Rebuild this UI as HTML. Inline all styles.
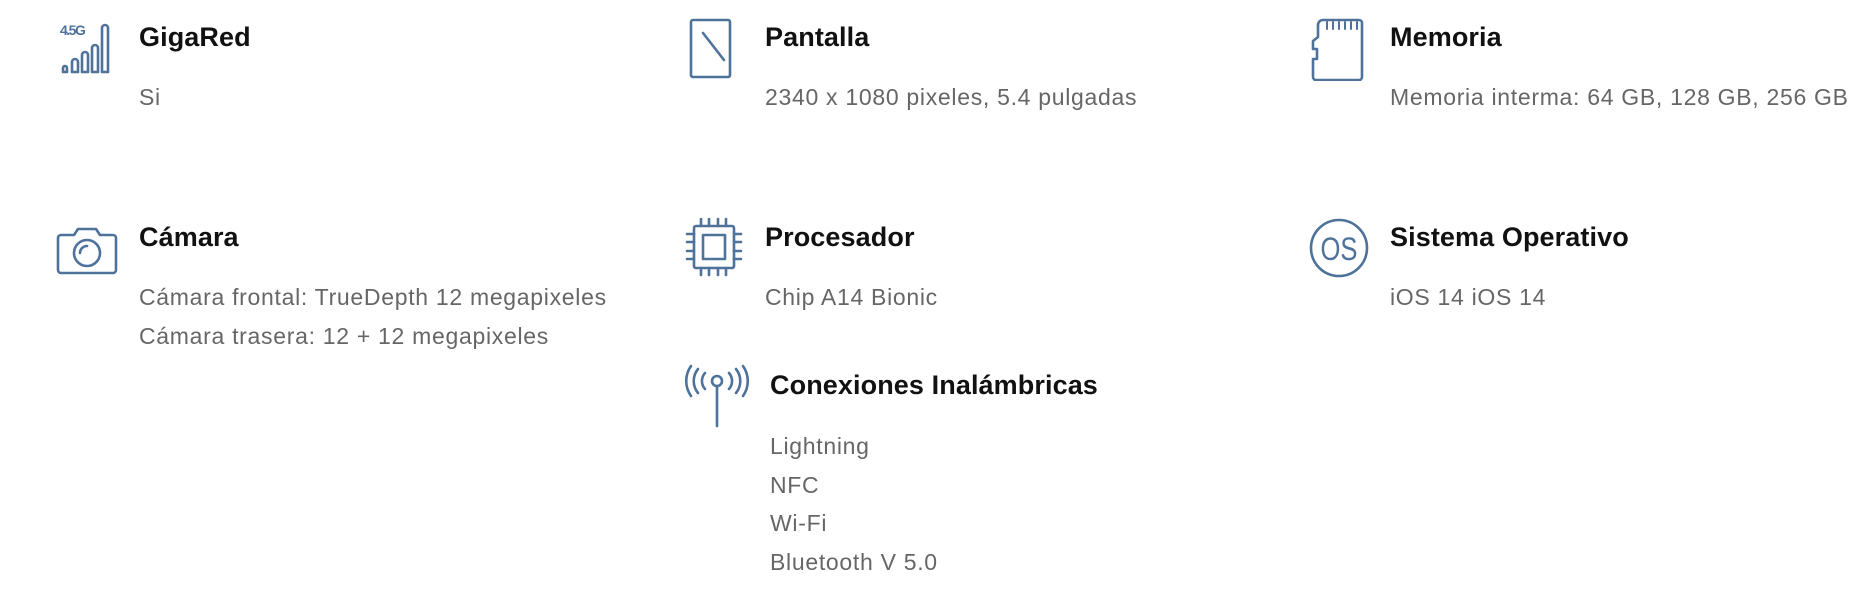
<!DOCTYPE html>
<html><head><meta charset="utf-8"><style>
body{margin:0;width:1866px;height:591px;background:#fff;position:relative;overflow:hidden;font-family:"Liberation Sans",sans-serif}
.t{position:absolute;font-weight:bold;font-size:27px;color:#111;line-height:30px;white-space:nowrap;letter-spacing:0.1px}
.v{position:absolute;font-size:23px;color:#666;line-height:38.5px;white-space:nowrap;letter-spacing:0.7px}
svg{position:absolute;fill:none;stroke:#4e729a;stroke-width:2.6;stroke-linecap:round;stroke-linejoin:round}
</style></head><body>
<svg style="left:58px;top:20px" width="60" height="56" viewBox="0 0 60 56">
<text x="2" y="15" font-size="14" font-weight="bold" fill="#4e729a" stroke="none" font-family="Liberation Sans" letter-spacing="-1.5">4.5G</text>
<path d="M5 52v-4a2 2 0 0 1 4 0v4z"/><path d="M14 52v-10a3 3 0 0 1 6 0v10z"/><path d="M24 52v-17a3 3 0 0 1 6 0v17z"/><path d="M34 52v-24a3 3 0 0 1 6 0v24z"/><path d="M44 52v-44a3 3 0 0 1 6 0v44z"/>
</svg>
<div class="t" style="left:139px;top:22px">GigaRed</div>
<div class="v" style="left:139px;top:78px">Si</div>

<svg style="left:688px;top:17px" width="46" height="64" viewBox="0 0 46 64"><rect x="3" y="3" width="39" height="57" rx="2"/><path d="M15 16l21 27"/></svg>
<div class="t" style="left:765px;top:22px">Pantalla</div>
<div class="v" style="left:765px;top:78px">2340 x 1080 pixeles, 5.4 pulgadas</div>

<svg style="left:1310px;top:17px" width="56" height="64" viewBox="0 0 56 64"><path d="M13 3h36a3 3 0 0 1 3 3v54a3 3 0 0 1-3 3H6a3 3 0 0 1-3-3V42h4v-10h-4v-8l5-4V8a5 5 0 0 1 5-5z"/><path d="M17 5v7M23 5v7M29 5v7M35 5v7M41 5v7M47 5v7" stroke-width="2"/></svg>
<div class="t" style="left:1390px;top:22px">Memoria</div>
<div class="v" style="left:1390px;top:78px">Memoria interma: 64 GB, 128 GB, 256 GB</div>

<svg style="left:56px;top:226px" width="62" height="50" viewBox="0 0 62 50"><path d="M5 9h13l4-6h18l4 6h13a3 3 0 0 1 3 3v32a3 3 0 0 1-3 3H5a3 3 0 0 1-3-3V12a3 3 0 0 1 3-3z"/><circle cx="31" cy="27" r="13"/><path d="M24 27a7 7 0 0 1 7-7"/></svg>
<div class="t" style="left:139px;top:222px">Cámara</div>
<div class="v" style="left:139px;top:278px">Cámara frontal: TrueDepth 12 megapixeles<br>Cámara trasera: 12 + 12 megapixeles</div>

<svg style="left:684px;top:216px" width="60" height="62" viewBox="0 0 60 62"><rect x="10" y="10" width="40" height="42" rx="2"/><rect x="19" y="19" width="22" height="24"/><path d="M17 3v7M25 3v7M34 3v7M42 3v7M17 52v7M25 52v7M34 52v7M42 52v7M3 18h7M3 26h7M3 35h7M3 43h7M50 18h7M50 26h7M50 35h7M50 43h7"/></svg>
<div class="t" style="left:765px;top:222px">Procesador</div>
<div class="v" style="left:765px;top:278px">Chip A14 Bionic</div>

<svg style="left:1308px;top:216px" width="62" height="64" viewBox="0 0 62 64"><circle cx="31" cy="32" r="28"/><text x="31" y="44" text-anchor="middle" font-size="32" fill="#4e729a" stroke="none" font-family="Liberation Sans" transform="translate(31 0) scale(0.8 1) translate(-31 0)">OS</text></svg>
<div class="t" style="left:1390px;top:222px">Sistema Operativo</div>
<div class="v" style="left:1390px;top:278px">iOS 14 iOS 14</div>

<svg style="left:684px;top:364px" width="66" height="66" viewBox="0 0 66 66"><circle cx="33" cy="17" r="5"/><path d="M33 22v40M21 9a12 12 0 0 0 0 16M45 9a12 12 0 0 1 0 16M14 5a19 19 0 0 0 0 24M52 5a19 19 0 0 1 0 24M7 2a26 26 0 0 0 0 30M59 2a26 26 0 0 1 0 30"/></svg>
<div class="t" style="left:770px;top:370px">Conexiones Inalámbricas</div>
<div class="v" style="left:770px;top:427px">Lightning<br>NFC<br>Wi-Fi<br>Bluetooth V 5.0</div>
</body></html>
